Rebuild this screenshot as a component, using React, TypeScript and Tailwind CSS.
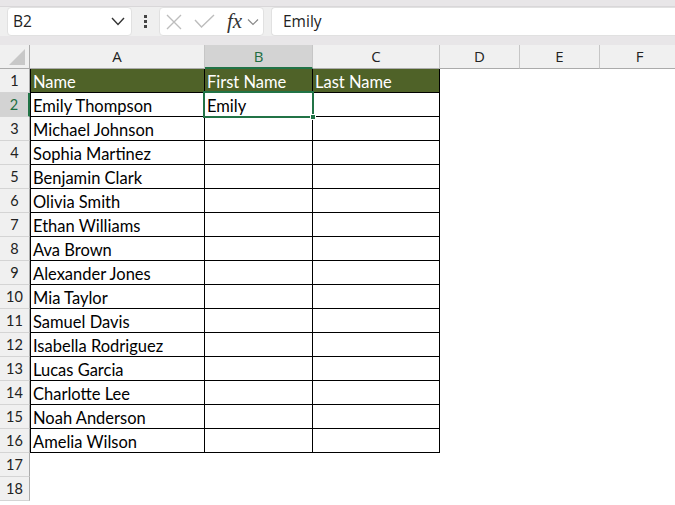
import React from 'react';

const cols = [
  { key: 'A', w: 'w-[175px]' },
  { key: 'B', w: 'w-[108px]' },
  { key: 'C', w: 'w-[127px]' },
  { key: 'D', w: 'w-[80px]' },
  { key: 'E', w: 'w-[80px]' },
  { key: 'F', w: 'w-[80px]' },
];

const names = [
  'Emily Thompson',
  'Michael Johnson',
  'Sophia Martinez',
  'Benjamin Clark',
  'Olivia Smith',
  'Ethan Williams',
  'Ava Brown',
  'Alexander Jones',
  'Mia Taylor',
  'Samuel Davis',
  'Isabella Rodriguez',
  'Lucas Garcia',
  'Charlotte Lee',
  'Noah Anderson',
  'Amelia Wilson',
];

const cellFont = { fontFamily: 'Lato, "Noto Sans", sans-serif' };
const uiFont = { fontFamily: '"Open Sans", sans-serif' };

function cellValue(row: number, col: number): string {
  if (row === 1) return ['Name', 'First Name', 'Last Name'][col] ?? '';
  if (col === 0 && row <= 16) return names[row - 2];
  if (col === 1 && row === 2) return 'Emily';
  return '';
}

const FormulaBar: React.FC = () => (
  <div className="h-[45px] bg-[#e8e6e8] flex flex-col">
    <div className="h-[7px] border-b border-[#d9d7d9]" />
    <div className="h-[29px] bg-[#efefef] flex items-center">
      {/* Name box */}
      <div className="ml-[7px] w-[125px] h-[29px] shrink-0 bg-white rounded-[4px] border border-[#e1e1e1] flex items-center justify-between pl-[5px] pr-[6px]">
        <span className="text-[15.5px] text-[#222]" style={uiFont}>B2</span>
        <svg width="14" height="9" viewBox="0 0 14 9">
          <polyline points="1,1 7,7.5 13,1" fill="none" stroke="#333" strokeWidth="1.4" />
        </svg>
      </div>
      {/* Dots */}
      <div className="w-[27px] shrink-0 flex flex-col items-center gap-[2px]">
        <span className="w-[3px] h-[3px] bg-[#444]" />
        <span className="w-[3px] h-[3px] bg-[#444]" />
        <span className="w-[3px] h-[3px] bg-[#444]" />
      </div>
      {/* Cancel / enter / fx */}
      <div className="w-[105px] h-[29px] shrink-0 bg-white rounded-[4px] border border-[#e1e1e1] flex items-center pl-[6px]">
        <svg width="16" height="16" viewBox="0 0 16 16">
          <path d="M1 1 L15 15 M15 1 L1 15" stroke="#bdbdbd" strokeWidth="1.4" />
        </svg>
        <svg width="21" height="15" viewBox="0 0 21 15" className="ml-[12px]">
          <polyline points="1,6 7.5,13 20,1" fill="none" stroke="#bdbdbd" strokeWidth="1.4" />
        </svg>
        <span className="ml-[12px] text-[21px] italic text-[#333] leading-none" style={{ fontFamily: '"Liberation Serif", serif' }}>fx</span>
        <svg width="12" height="8" viewBox="0 0 12 8" className="ml-[5px]">
          <polyline points="1,1.5 6,6.5 11,1.5" fill="none" stroke="#888" strokeWidth="1.2" />
        </svg>
      </div>
      {/* Formula input */}
      <div className="ml-[7px] flex-1 h-[29px] bg-white rounded-l-[4px] border border-r-0 border-[#e1e1e1] flex items-center pl-[11px]">
        <span className="text-[15.5px] text-[#222]" style={uiFont}>Emily</span>
      </div>
    </div>
    <div className="flex-1" />
  </div>
);

const Sheet: React.FC = () => {
  const rows = Array.from({ length: 18 }, (_, i) => i + 1);
  return (
    <div className="relative bg-white">
      {/* Column headers */}
      <div className="flex h-[24px]">
        <div className="w-[30px] shrink-0 h-[24px] bg-[#f0f0f0] border-r border-b border-[#ababab] relative">
          <svg width="16" height="16" viewBox="0 0 16 16" className="absolute right-[4px] bottom-[3px]">
            <polygon points="16,0 16,16 0,16" fill="#c8c8c8" />
          </svg>
        </div>
        {cols.map((c) => {
          const sel = c.key === 'B';
          return (
            <div
              key={c.key}
              className={`${c.w} shrink-0 h-[24px] border-r border-[#c6c6c6] flex items-center justify-center text-[15px] ${
                sel ? 'bg-[#d3d3d3] text-[#1e6e42] border-b-2 border-b-[#217346]' : 'bg-[#f0f0f0] text-[#222] border-b border-b-[#ababab]'
              }`}
              style={uiFont}
            >
              {c.key}
            </div>
          );
        })}
      </div>
      {/* Rows */}
      {rows.map((r) => {
        const selRow = r === 2;
        return (
          <div key={r} className="flex h-[24px]">
            <div
              className={`w-[30px] shrink-0 h-[24px] border-b border-b-[#d4d4d4] flex items-end justify-center pb-[4px] text-[14.5px] leading-none ${
                selRow ? 'bg-[#d3d3d3] text-[#1e6e42] border-r-2 border-r-[#217346]' : 'bg-[#f0f0f0] text-[#222] border-r border-r-[#ababab]'
              }`}
              style={cellFont}
            >
              {r}
            </div>
            {cols.map((c, ci) => {
              const inTable = r <= 16 && ci < 3;
              const header = r === 1 && ci < 3;
              const val = cellValue(r, ci);
              return (
                <div
                  key={c.key}
                  className={`${c.w} shrink-0 h-[24px] flex items-end pl-[2px] pb-[2px] text-[16.5px] leading-none whitespace-nowrap overflow-hidden ${
                    inTable ? 'border-r border-b border-black' : ''
                  } ${inTable && ci === 0 ? 'border-l' : ''} ${header ? 'bg-[#4f6228] text-white' : 'text-black'}`}
                  style={cellFont}
                >
                  {val}
                </div>
              );
            })}
          </div>
        );
      })}
      {/* Active cell B2 */}
      <div className="absolute left-[203px] top-[46px] w-[111px] h-[27px] border-2 border-[#217346] pointer-events-none" />
      <div className="absolute left-[310px] top-[69px] w-[6px] h-[6px] bg-[#217346] border border-white pointer-events-none" />
    </div>
  );
};

export default function App() {
  return (
    <div className="w-[675px] h-[505px] overflow-hidden bg-white">
      <FormulaBar />
      <Sheet />
    </div>
  );
}
